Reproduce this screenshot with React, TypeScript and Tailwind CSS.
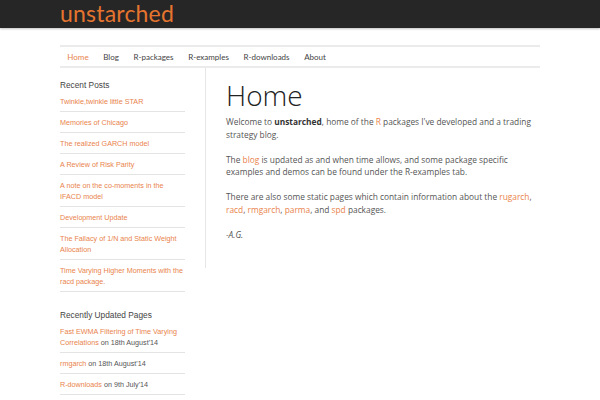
const navItems = ["Home", "Blog", "R-packages", "R-examples", "R-downloads", "About"];

// lines are broken where the original sidebar breaks them
const recentPosts: string[][] = [
  ["Twinkle,twinkle little STAR"],
  ["Memories of Chicago"],
  ["The realized GARCH model"],
  ["A Review of Risk Parity"],
  ["A note on the co-moments in the", "IFACD model"],
  ["Development Update"],
  ["The Fallacy of 1/N and Static Weight", "Allocation"],
  ["Time Varying Higher Moments with the", "racd package."],
];

function A({ children }: { children: React.ReactNode }) {
  return <a className="text-[#e9834c]">{children}</a>;
}

export default function App() {
  return (
    <div className="min-h-[400px] bg-white font-['Lato',sans-serif]">
      <header className="h-[28px] bg-[#262626] shadow-[0_1px_2px_rgba(0,0,0,0.25)]">
        <div className="mx-auto w-[480px]">
          <h1 className="text-[23px] leading-[27px] tracking-[0.2px] text-[#e5742f]">unstarched</h1>
        </div>
      </header>

      <div className="mx-auto w-[480px]">
        <nav className="mt-[17px] flex h-[23px] items-center border-y-2 border-[#ebebeb] text-[8px] text-[#444]">
          {navItems.map((item, i) => (
            <span key={item} className={"px-[7.3px] " + (i === 0 ? "text-[#e9834c]" : "")}>
              {item}
            </span>
          ))}
        </nav>

        <div className="flex items-start">
          <aside className="w-[145px] shrink-0 pt-[11px] pr-5 font-['Liberation_Sans','Arial',sans-serif] text-[7.2px]">
            <h3 className="text-[8.3px] leading-[12px] text-[#444]">Recent Posts</h3>
            <ul className="w-[125px]">
              {recentPosts.map((lines) => (
                <li
                  key={lines[0]}
                  className="border-b border-[#e4e4e4] py-[4.5px] leading-[11px] whitespace-nowrap text-[#e9834c]"
                >
                  {lines.map((l) => (
                    <span key={l} className="block">
                      {l}
                    </span>
                  ))}
                </li>
              ))}
            </ul>

            <h3 className="mt-[17px] text-[8.3px] leading-[12px] text-[#444]">Recently Updated Pages</h3>
            <ul className="w-[125px] whitespace-nowrap text-[#555]">
              <li className="border-b border-[#e4e4e4] py-[4.5px] leading-[11px]">
                <span className="block text-[#e9834c]">Fast EWMA Filtering of Time Varying</span>
                <span className="block">
                  <A>Correlations</A> on 18th August'14
                </span>
              </li>
              <li className="border-b border-[#e4e4e4] py-[4.5px] leading-[11px]">
                <A>rmgarch</A> on 18th August'14
              </li>
              <li className="border-b border-[#e4e4e4] py-[4.5px] leading-[11px]">
                <A>R-downloads</A> on 9th July'14
              </li>
            </ul>
          </aside>

          <main className="h-[200px] flex-1 border-l border-[#e6e6e6] pl-5 pt-[12px] font-['Open_Sans',sans-serif] text-[8.35px] leading-[12.5px] text-[#555]">
            <h2 className="mb-[6px] text-[28px] font-light leading-[30px] text-[#222]">Home</h2>
            <div className="w-[312px]">
              <p>
                Welcome to <strong className="font-bold text-[#333]">unstarched</strong>, home of the <A>R</A> packages
                I've developed and a trading strategy blog.
              </p>
              <p className="mt-[12.5px]">
                The <A>blog</A> is updated as and when time allows, and some package specific examples and demos can be
                found under the R-examples tab.
              </p>
              <p className="mt-[12.5px]">
                There are also some static pages which contain information about the <A>rugarch</A>, <A>racd</A>,{" "}
                <A>rmgarch</A>, <A>parma</A>, and <A>spd</A> packages.
              </p>
              <p className="mt-[12.5px] italic">-A.G.</p>
            </div>
          </main>
        </div>
      </div>
    </div>
  );
}
